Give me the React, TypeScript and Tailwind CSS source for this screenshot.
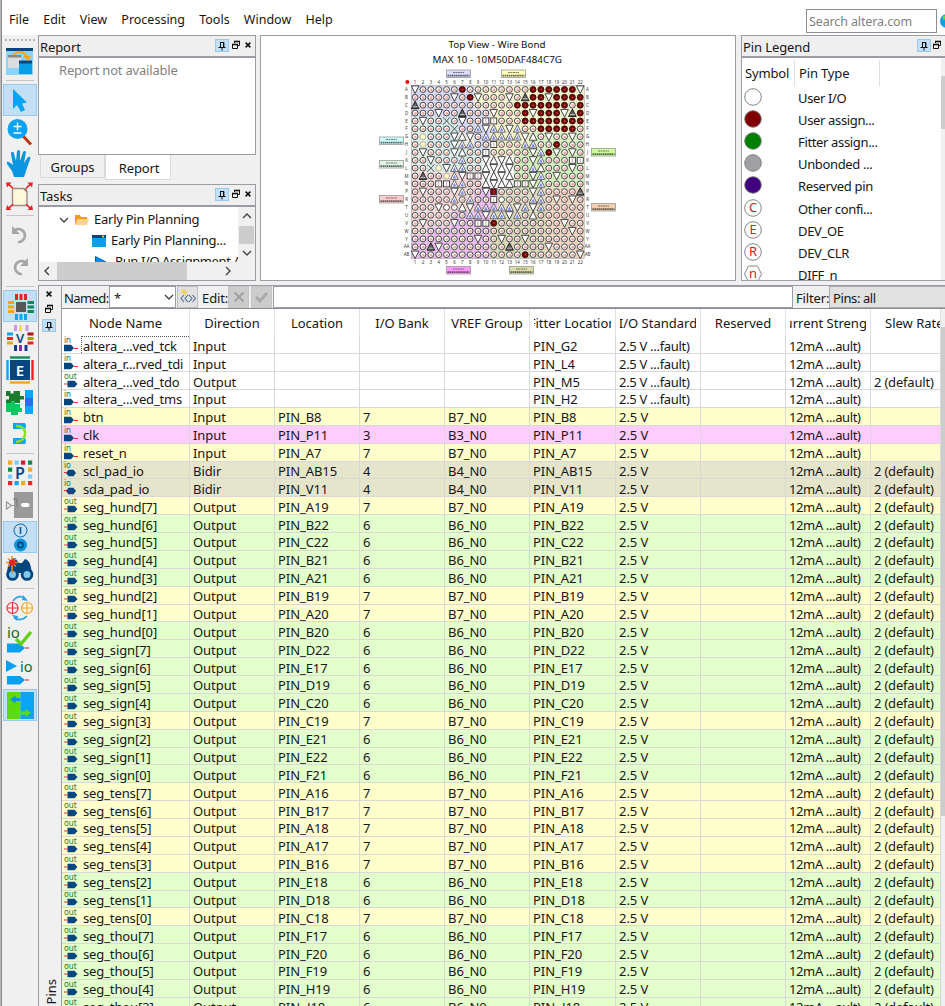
import React from "react";

/* ---------- data ---------- */

type Kind = "in" | "out" | "io";
type Row = [string, Kind, string, string];

const jtag: [string, Kind, string][] = [
  ["altera_...ved_tck", "in", "G2"],
  ["altera_r...rved_tdi", "in", "L4"],
  ["altera_...ved_tdo", "out", "M5"],
  ["altera_...ved_tms", "in", "H2"],
];

const rows: Row[] = [
  ["btn", "in", "B8", "7"],
  ["clk", "in", "P11", "3"],
  ["reset_n", "in", "A7", "7"],
  ["scl_pad_io", "io", "AB15", "4"],
  ["sda_pad_io", "io", "V11", "4"],
  ["seg_hund[7]", "out", "A19", "7"],
  ["seg_hund[6]", "out", "B22", "6"],
  ["seg_hund[5]", "out", "C22", "6"],
  ["seg_hund[4]", "out", "B21", "6"],
  ["seg_hund[3]", "out", "A21", "6"],
  ["seg_hund[2]", "out", "B19", "7"],
  ["seg_hund[1]", "out", "A20", "7"],
  ["seg_hund[0]", "out", "B20", "6"],
  ["seg_sign[7]", "out", "D22", "6"],
  ["seg_sign[6]", "out", "E17", "6"],
  ["seg_sign[5]", "out", "D19", "6"],
  ["seg_sign[4]", "out", "C20", "6"],
  ["seg_sign[3]", "out", "C19", "7"],
  ["seg_sign[2]", "out", "E21", "6"],
  ["seg_sign[1]", "out", "E22", "6"],
  ["seg_sign[0]", "out", "F21", "6"],
  ["seg_tens[7]", "out", "A16", "7"],
  ["seg_tens[6]", "out", "B17", "7"],
  ["seg_tens[5]", "out", "A18", "7"],
  ["seg_tens[4]", "out", "A17", "7"],
  ["seg_tens[3]", "out", "B16", "7"],
  ["seg_tens[2]", "out", "E18", "6"],
  ["seg_tens[1]", "out", "D18", "6"],
  ["seg_tens[0]", "out", "C18", "7"],
  ["seg_thou[7]", "out", "F17", "6"],
  ["seg_thou[6]", "out", "F20", "6"],
  ["seg_thou[5]", "out", "F19", "6"],
  ["seg_thou[4]", "out", "H19", "6"],
  ["seg_thou[3]", "out", "J18", "6"],
];

const bankColor: Record<string, string> = {
  "3": "bg-[#ffccff]",
  "4": "bg-[#e5e5cc]",
  "6": "bg-[#e3ffcc]",
  "7": "bg-[#ffffcc]",
};

const direction: Record<Kind, string> = { in: "Input", out: "Output", io: "Bidir" };

const headers = [
  "Node Name",
  "Direction",
  "Location",
  "I/O Bank",
  "VREF Group",
  "Fitter Location",
  "I/O Standard",
  "Reserved",
  "Current Strength",
  "Slew Rate",
];

const legend: [string, string, string][] = [
  ["User I/O", "#ffffff", ""],
  ["User assign...", "#800000", ""],
  ["Fitter assign...", "#008000", ""],
  ["Unbonded ...", "#a0a0a4", ""],
  ["Reserved pin", "#400080", ""],
  ["Other confi...", "#ffffff", "C"],
  ["DEV_OE", "#ffffff", "E"],
  ["DEV_CLR", "#ffffff", "R"],
  ["DIFF_n", "#ffffff", "n"],
];

/* ---------- chip package view ---------- */

/* o pin, r assigned, v/a triangles, b clocked triangle, g ground, s square, d dark square, x cross, y yellow, w empty */
const pinMap = [
  "voooooroooooooorrrrrrv",
  "ooooovorvooovogrrvrrrr",
  "goooooooooooorrrrrrror",
  "ooovoogooovooorvrrrvgr",
  "ovooxovoossooorrrrrrrr",
  "oooooxoobvbbvboorrrrro",
  "oyooovavobbbbbvaovoovo",
  "oyooovbboosooobboorooo",
  "ovooovaoosooooovbrvovo",
  "oovoooboovavaoovboooss",
  "ooxyvbbooavavoobaooovo",
  "ogooybvssvavaoovbovooo",
  "ooossbbooavaassvbooooo",
  "ovooovboovdoooovboooog",
  "ooooobobooswooobbovovo",
  "ooovwwavbbbbbvbvbooooo",
  "ooooooobbvbbvboaoooooo",
  "ovooovoossroooooooovoo",
  "oooooooooooooooooooovo",
  "oooooooovoovoovooooooo",
  "oogvoooooooogoooovoooo",
  "voooooooooooooroooooov",
];

const rowNames = "A B C D E F G H J K L M N P R T U V W Y AA AB".split(" ");

/* [x, y, w, h, color] in pin units */
const regions: [number, number, number, number, string][] = [
  [0, 0, 22, 22, "#f3f3ec"],
  [0, 0, 9, 4, "#dcdcf6"],
  [5, 3, 4, 3, "#dcdcf6"],
  [8, 3, 2, 6, "#dcdcf6"],
  [2, 4, 4, 4, "#d6efee"],
  [0, 4, 2, 9, "#e7f2ea"],
  [2, 8, 7, 3, "#e0f1ed"],
  [8, 0, 8, 3, "#fbf9d3"],
  [10, 3, 6, 6, "#fbf9d0"],
  [16, 0, 6, 6, "#f1f7cf"],
  [13, 8, 9, 5, "#d6f5bf"],
  [15, 6, 7, 3, "#ddf6c8"],
  [9, 9, 4, 4, "#ffffff"],
  [0, 11, 9, 5, "#f8dddd"],
  [0, 16, 5, 3, "#f7dcde"],
  [5, 16, 5, 6, "#efbff3"],
  [2, 18, 8, 4, "#efbff3"],
  [0, 19, 2, 3, "#efbff3"],
  [8, 13, 3, 3, "#efbff3"],
  [10, 16, 8, 6, "#dbdbbc"],
  [11, 13, 6, 3, "#e3e0c5"],
  [17, 13, 5, 9, "#f2dac5"],
];

const banks: [number, number, string][] = [
  [446, 69.5, "#dcdcff"],
  [501, 69.5, "#ffffb8"],
  [379, 136.5, "#ccffff"],
  [379, 160, "#e0f5e5"],
  [379, 195, "#ffcccc"],
  [591, 148, "#ccff99"],
  [591, 203, "#f5d0b0"],
  [446, 266, "#ff99ff"],
  [509, 266, "#dcdca8"],
];

function Pin({ k, x, y }: { k: string; x: number; y: number }) {
  switch (k) {
    case "v":
      return <path d={`M${x - 3.8} ${y - 3.6}h7.6L${x} ${y + 4}z`} fill="#fff" stroke="#333" strokeWidth="0.9" />;
    case "a":
      return <path d={`M${x - 3.8} ${y + 3.6}h7.6L${x} ${y - 4}z`} fill="#fff" stroke="#333" strokeWidth="0.9" />;
    case "b":
      return (
        <g>
          <path d={`M${x - 3.8} ${y + 3.4}h7.6L${x} ${y - 4}z`} fill="#fff" stroke="#444" strokeWidth="0.8" />
          <path d={`M${x - 1.8} ${y + 2.5}h3.6L${x} ${y - 1.2}z`} fill="#7c86ef" />
        </g>
      );
    case "g":
      return (
        <g>
          <path d={`M${x - 3.8} ${y + 3.4}h7.6L${x} ${y - 4}z`} fill="#666" stroke="#111" strokeWidth="0.9" />
          <path d={`M${x - 2.5} ${y + 1.4}h5`} stroke="#ddd" strokeWidth="0.7" />
        </g>
      );
    case "x":
      return <path d={`M${x - 3.6} ${y - 3.8}L${x + 3.6} ${y + 3.8}M${x + 3.6} ${y - 3.8}L${x - 3.6} ${y + 3.8}`} fill="none" stroke="#444" strokeWidth="0.9" />;
    case "s":
    case "d":
      return (
        <g>
          <rect x={x - 3} y={y - 3} width="6" height="6" fill={k === "d" ? "#800000" : "#fff"} stroke="#333" strokeWidth="0.9" />
          <path d={`M${x} ${y - 2}v4`} stroke="#a66" strokeWidth="0.6" />
        </g>
      );
    case "r":
      return (
        <g>
          <circle cx={x} cy={y} r="3" fill="#7c0404" stroke="#2c0000" strokeWidth="0.8" />
          <circle cx={x + 0.3} cy={y} r="0.9" fill="#a44" />
        </g>
      );
    default:
      return (
        <g>
          <circle cx={x} cy={y} r="2.9" fill={k === "y" ? "#fff9c0" : "#fff"} stroke={k === "y" ? "#aaa" : "#333"} strokeWidth="0.9" />
          {k === "o" && <circle cx={x + 0.3} cy={y + 0.4} r="1.4" fill="#f4a79d" />}
        </g>
      );
  }
}

function ChipView() {
  const p = 7.864;
  const px = (c: number) => 415.1 + c * p;
  const py = (r: number) => 89.5 + r * p;
  return (
    <svg className="block h-[244px] w-[475px]" viewBox="261 36 475 244" fontFamily="Noto Sans, sans-serif">
      <defs>
        <pattern id="net" width="2.62" height="2.62" patternUnits="userSpaceOnUse">
          <rect width="1.1" height="1.1" fill="#8a8a90" opacity="0.4" />
        </pattern>
      </defs>
      <text x="448.500" y="47.500" fontSize="9.800" fill="#111" textLength="97">Top View - Wire Bond</text>
      <text x="432.500" y="63" fontSize="9.800" fill="#111" textLength="129.500">MAX 10 - 10M50DAF484C7G</text>
      {regions.map(([x, y, w, h, c], i) => (
        <rect key={i} x={411.2 + x * p} y={85.6 + y * p} width={w * p} height={h * p} fill={c} />
      ))}
      <rect x="411.200" y="85.600" width="173" height="173" fill="url(#net)" stroke="#999" strokeWidth="0.5" />
      {pinMap.map((line, r) => line.split("").map((k, c) => <Pin key={`${r}-${c}`} k={k} x={px(c)} y={py(r)} />))}
      {rowNames.map((n, r) => (
        <g key={n} fontSize="4.4" fill="#333" textAnchor="middle">
          <text x="406.500" y={py(r) + 1.6}>{n}</text>
          <text x="587.500" y={py(r) + 1.6}>{n}</text>
          <text x={px(r)} y="83.800">{r + 1}</text>
          <text x={px(r)} y="264">{r + 1}</text>
        </g>
      ))}
      <circle cx="407.300" cy="82" r="2" fill="#f00" />
      {banks.map(([x, y, c], i) => (
        <g key={i}>
          <rect x={x + 0.5} y={y + 0.5} width="24" height="7.500" fill={c} stroke="#999" strokeWidth="0.8" />
          <path d={`M${x + 7} ${y + 3}h11`} stroke="#333" strokeWidth="0.9" strokeDasharray="2 0.5" opacity="0.7" />
          <path d={`M${x + 1.5} ${y + 6.1}h22`} stroke="#333" strokeWidth="1.6" strokeDasharray="1.6 0.5" opacity="0.75" />
        </g>
      ))}
    </svg>
  );
}

/* ---------- dock controls ---------- */

const PinGlyph = () => (
  <span className="flex h-[13px] w-[14px] shrink-0 items-center justify-center border border-[#99c9ef] bg-[#c3dff5]">
    <svg className="h-[10px] w-[10px] shrink-0" viewBox="0 0 10 10" fill="none" stroke="#111">
      <path d="M3.500 1.500v5M3 1.500h4M6.500 1.500v5" />
      <path d="M7 1.500v5" strokeWidth="0.8" />
      <path d="M1.500 6.500h7M5 7v2.500" />
    </svg>
  </span>
);
const FloatGlyph = () => (
  <svg className="block h-[10px] w-[10px] shrink-0" viewBox="0 0 10 10" fill="none" stroke="#111">
    <path d="M3.500 3V1.500h5v4H7" />
    <path d="M3 1.500h6" strokeWidth="1.6" />
    <path d="M1.500 4.500h5v4h-5z" />
    <path d="M1 4.500h6" strokeWidth="1.6" />
  </svg>
);
const CloseGlyph = () => (
  <svg className="block h-[10px] w-[10px] shrink-0" viewBox="0 0 10 10" stroke="#111" strokeWidth="1.5">
    <path d="M2.600 2.600l4.800 4.800M7.400 2.600L2.600 7.400" />
  </svg>
);

function DockTitle({ title, close = true }: { title: string; close?: boolean }) {
  return (
    <div className={`flex h-[22px] shrink-0 items-center border-b-2 border-[#9c9ca5] bg-[#efefef] pl-[1px] ${close ? "pr-[2px]" : "pr-[3px]"}`}>
      <span className="flex-1 pt-[2px] leading-none tracking-[-0.100px]">{title}</span>
      <div className="flex gap-[1.500px] pb-[1px]">
        <PinGlyph />
        <span className="pt-[1px]"><FloatGlyph /></span>
        {close && <span className="pl-[1px] pt-[1px]"><CloseGlyph /></span>}
      </div>
    </div>
  );
}

/* ---------- tool strip ---------- */

function Tool({ children, on = false }: { children: React.ReactNode; on?: boolean }) {
  return (
    <div className={on ? "h-[32px] w-[34px] border border-[#99c9ef] bg-[#c3dff5]" : "h-[32px] w-[34px] border border-transparent"}>
      <svg className="-ml-px -mt-px block h-[32px] w-[34px]" viewBox="0 0 34 32" fontFamily="Noto Sans, sans-serif">
        {children}
      </svg>
    </div>
  );
}
const Sep = () => (
  <div className="flex h-[7px] w-[34px] items-center justify-center">
    <div className="h-px w-[28px] bg-[#c6c6c6]" />
  </div>
);

const gridDots: [number, number, string][] = [
  [5, 3, "#f9a91c"], [11.5, 3, "#7ecbf5"], [18, 3, "#d81e2c"], [25, 3, "#0b8a4f"],
  [5, 10, "#0b8a4f"], [25, 10, "#f9a91c"], [5, 17, "#7ecbf5"], [25, 17, "#7ecbf5"],
  [5, 23.5, "#e8262c"], [11.5, 23.5, "#0ea5f0"], [18, 23.5, "#f9a91c"], [25, 23.5, "#e8262c"],
];

const corner = "M0 0h5.500L3.900 1.700 7.500 5.200 6.500 6.200 2.700 2.900 1 5z";

function Toolbar() {
  return (
    <div className="flex w-[36px] shrink-0 flex-col items-start bg-[#f0f0f0] pl-[1px]">
      <div className="flex h-[10px] items-center pl-[2px]">
        <div className="w-[30px] border-t-2 border-dotted border-[#b5b5b5]" />
      </div>
      <Tool>
        <rect x="3" y="3" width="27" height="27" fill="#8bd3f7" />
        <rect x="3" y="3" width="27" height="3" fill="#04477e" />
        <path d="M5 11h13v12H5z" fill="#dcdcdc" />
        <path d="M5 10h13v2.500H5z" fill="#8a8484" />
        <path d="M16 17h13v12H16z" fill="#0a9de8" />
        <path d="M16 15.500h13v3H16z" fill="#04477e" />
        <path d="M10 10Q17 3 24 11" fill="none" stroke="#f9a51a" strokeWidth="2" />
        <path d="M20 11h8l-3 5z" fill="#f9a51a" />
      </Tool>
      <Sep />
      <Tool on>
        <path d="M10 5v20l4-4 4 7 4-2-3-6.500 5-1z" fill="#08a5f4" />
      </Tool>
      <Tool>
        <path d="M20 20l8 8.500" stroke="#b83a12" strokeWidth="3" />
        <circle cx="14.500" cy="13" r="10" fill="#0aa2f2" />
        <path d="M14.500 6.500v8M10.500 10.500h8M10.500 17h8" stroke="#fff" strokeWidth="1.400" />
      </Tool>
      <Tool>
        <path d="M11 29l-2-6-5-7q-1-3 2-2l4 3L8 6q0-3 2.500-2l2.500 9 1-10q1.500-2 3 0l0 10 3-9q2-2 3 0l-2 11 4-6q2-1 2.500 1L24 20l-3 9z" fill="#0a96e2" />
      </Tool>
      <Tool>
        <path d="M9.500 8.500h11l3.500 3v14h-14.500z" fill="#fdf8dc" stroke="#a58b80" strokeWidth="1.400" />
        <path d="M20 8.500h4v4z" fill="#9a6f62" />
        <g fill="#e82028">
          <path d={corner} transform="translate(3 2.500)" />
          <path d={corner} transform="translate(30 2.500) scale(-1 1)" />
          <path d={corner} transform="translate(3 30) scale(1 -1)" />
          <path d={corner} transform="translate(30 30) scale(-1 -1)" />
        </g>
      </Tool>
      <Sep />
      <Tool>
        <path d="M12 11a6.500 6.500 0 1 1 3 12" fill="none" stroke="#a6a6a6" strokeWidth="2.600" />
        <path d="M9 7v8h8z" fill="#a6a6a6" />
      </Tool>
      <Tool>
        <path d="M22 11a6.500 6.500 0 1 0-3 12" fill="none" stroke="#a6a6a6" strokeWidth="2.600" />
        <path d="M25 7v8h-8z" fill="#a6a6a6" />
      </Tool>
      <Sep />
      <Tool on>
        <rect x="13" y="12" width="10" height="10" fill="#585858" />
        <path d="M13.500 4v6M18 4v6M22.500 4v6" stroke="#ef2028" strokeWidth="3" />
        <path d="M13.500 24v6M18 24v6M22.500 24v6" stroke="#0ea5ea" strokeWidth="3" />
        <path d="M5 12.500h6M5 17h6M5 21.500h6" stroke="#f9a31a" strokeWidth="3" />
        <path d="M24.500 12.500h6.500M24.500 17h6.500M24.500 21.500h6.500" stroke="#128a55" strokeWidth="3" />
      </Tool>
      <Tool>
        <path d="M12.500 3v6M24 3v6" stroke="#c79be0" strokeWidth="3" />
        <path d="M17.500 3v6" stroke="#f7e51c" strokeWidth="3" />
        <path d="M12.500 23v6M23 23v6" stroke="#123e8b" strokeWidth="3" />
        <path d="M17.500 23v6" stroke="#8330a0" strokeWidth="3" />
        <path d="M4 12h6" stroke="#0ea5ea" strokeWidth="3" />
        <path d="M4 16.500h6M24.500 21h6" stroke="#ef2028" strokeWidth="3" />
        <path d="M4 21h6" stroke="#f9a31a" strokeWidth="3" />
        <path d="M24.500 12h6" stroke="#a81218" strokeWidth="3" />
        <path d="M24.500 16.500h6" stroke="#a79a10" strokeWidth="3" />
        <text x="17" y="21" fontSize="13" fontWeight="600" textAnchor="middle" fill="#0d478b">V</text>
      </Tool>
      <Tool>
        <rect x="7" y="6" width="20" height="20" fill="#04477e" />
        <path d="M7 3.500h20" stroke="#128a55" strokeWidth="2.400" />
        <path d="M7 28.500h20" stroke="#f9a31a" strokeWidth="2.400" />
        <path d="M4.500 6v20" stroke="#0ea5ea" strokeWidth="2.400" />
        <path d="M29.500 6v20" stroke="#ef2028" strokeWidth="2.400" />
        <text x="17" y="21.500" fontSize="15" fontWeight="600" textAnchor="middle" fill="#fff">E</text>
      </Tool>
      <Tool>
        <rect x="22" y="4" width="8" height="24" fill="#0aa5f5" />
        <rect x="22" y="12" width="8" height="8" fill="#2d6af0" />
        <path d="M3 5h4.500v2.500h3V5H17v5h4v3.500h-4V17H3v-3.500h3V10H3z" fill="#1c7b2e" />
        <path d="M3 17h5v-2h4v3h5v4h2v4h-4v3H8v-3H3z" fill="#0ec760" />
      </Tool>
      <Tool>
        <path d="M10 5h12q2 3 0 6H10zM10 20h12q2 3 0 6H10z" fill="#0aa5f5" />
        <path d="M13 8q9 0 9 7.500T13 24" fill="none" stroke="#8fdc1e" strokeWidth="2.400" />
      </Tool>
      <Sep />
      <Tool>
        {gridDots.map(([x, y, c], i) => (
          <rect key={i} x={x} y={y + 0.5} width="4.200" height="4.200" fill={c} />
        ))}
        <text x="17" y="22" fontSize="16" fontWeight="600" textAnchor="middle" fill="#0d478b">P</text>
      </Tool>
      <Tool>
        <rect x="11" y="3" width="19" height="26" fill="#9a9a9a" />
        <path d="M3.500 13v7l5-3.500zM8 16.500h5" fill="#eee" stroke="#999" strokeWidth="1.200" />
        <path d="M10 10h4v8" stroke="#777" fill="none" />
        <rect x="18" y="14" width="8.500" height="4" rx="2" fill="#fff" />
      </Tool>
      <Tool on>
        <circle cx="17.500" cy="9.500" r="6.500" fill="none" stroke="#1266a8" />
        <path d="M17.500 6v7" stroke="#0d5c9c" strokeWidth="1.600" />
        <circle cx="17.500" cy="24" r="6.500" fill="#0a95dc" />
        <circle cx="17.500" cy="24" r="2.600" fill="none" stroke="#04477e" strokeWidth="1.600" />
      </Tool>
      <Tool>
        <path d="M4 20q1-14 8-15l4 5h3l3-4q5 0 7 14z" fill="#04477e" />
        <circle cx="9.500" cy="21.500" r="6.300" fill="#04477e" />
        <circle cx="24" cy="21.500" r="6.300" fill="#04477e" />
        <circle cx="9.500" cy="21.500" r="3.500" fill="#7ec9f0" />
        <circle cx="24" cy="21.500" r="3.500" fill="#7ec9f0" />
        <path d="M9 3v17M3 9.500h12M5 5.500l8 8M13 5.500l-8 8" stroke="#f08a18" strokeWidth="1.600" />
        <circle cx="9" cy="9.500" r="3" fill="#e8202a" />
      </Tool>
      <Sep />
      <Tool>
        <circle cx="9.500" cy="16" r="5.500" fill="#fff5f5" stroke="#e83038" strokeWidth="1.200" />
        <path d="M4 16h11M9.500 10.500v11" stroke="#e83038" strokeWidth="1.200" />
        <circle cx="24" cy="16" r="5.500" fill="#fff8e8" stroke="#f5a623" strokeWidth="1.200" />
        <path d="M18.500 16h11M24 10.500v11" stroke="#f5a623" strokeWidth="1.200" />
        <path d="M10 9Q15 2 22 6M24 24Q18 30 11 26" fill="none" stroke="#2aa3e0" strokeWidth="1.600" />
        <path d="M20 3l5 6-6-1zM14 29l-5-6 6 1z" fill="#2aa3e0" />
      </Tool>
      <Tool>
        <text x="4" y="14" fontSize="15" fill="#156b27">io</text>
        <path d="M4 19.500h13l5 4.500-5 4.500H4z" fill="#0aa0f0" />
        <path d="M22 24h4" stroke="#e02030" />
        <path d="M13 15l5 5L28 8" fill="none" stroke="#66cf18" strokeWidth="3.400" />
      </Tool>
      <Tool>
        <path d="M3 4v12l11-6z" fill="#0aa0f0" />
        <text x="17" y="15.500" fontSize="14.500" fill="#156b27">io</text>
        <path d="M4 20h13l5 4-5 4.500H4z" fill="#0aa0f0" />
        <path d="M22 24h4" stroke="#e02030" />
      </Tool>
      <div className="pt-[1px]">
        <Tool on>
          <rect x="4" y="3" width="13.500" height="27" fill="#5cdb0e" />
          <rect x="17.500" y="3" width="13.500" height="27" fill="#0aa5f5" />
          <path d="M7 10.500l5.500-4v2.500h5v3h-5v2.500z" fill="#0a95e8" />
          <path d="M28 24l-5.500-4v2.500h-5v3h5V28z" fill="#5cdb0e" />
        </Tool>
      </div>
    </div>
  );
}

/* ---------- pins table ---------- */

function NodeIcon({ kind }: { kind: Kind }) {
  return (
    <svg className="h-[17px] w-[16px] shrink-0" viewBox="0 0 16 17" fontFamily="Noto Sans, sans-serif">
      <text x="2" y="7" fontSize="8" fill="#1b7a2c">{kind}</text>
      {kind === "in" && (
        <>
          <path d="M2 8.800h7l3 3.300-3 3.200H2z" fill="#04477e" />
          <path d="M12 12.500h4" stroke="#e03040" />
        </>
      )}
      {kind === "out" && (
        <>
          <path d="M5.500 8.800h7l3 3.300-3 3.200h-7z" fill="#04477e" />
          <path d="M2 12h4" stroke="#e03040" />
        </>
      )}
      {kind === "io" && (
        <>
          <path d="M6.500 8.800h5l2.500 3.300-2.500 3.200h-5L4 12.100z" fill="#04477e" />
          <path d="M2 11.500h3" stroke="#e03040" />
        </>
      )}
    </svg>
  );
}

const gridCols = "grid grid-cols-[128px_85px_85px_85px_85px_86px_85px_85px_85px_70px]";

const cellTracking = (s: string, i: number) => {
  if (i === 8) return "tracking-[-0.200px]";
  if (s.startsWith("12mA")) return "tracking-[-0.380px]";
  return s.includes("...") ? "tracking-[-0.300px]" : "tracking-[-0.060px]";
};

function TableRow({ name, kind, cells, color, first }: { name: string; kind: Kind; cells: string[]; color: string; first: boolean }) {
  return (
    <div className={`${gridCols} ${color} h-[17.880px]`}>
      <div className="flex items-center border-b border-r border-[#d8d8d8]">
        <NodeIcon kind={kind} />
        <span className={first ? "ml-[3px] flex h-full flex-1 items-center border-l border-t border-dotted border-[#555] pl-[1px]" : "ml-[3px] pl-[2px] pt-[1px]"}>
          <span className={`block pt-[2px] ${name.includes("...") ? "tracking-[-0.180px]" : "tracking-[-0.120px]"}`}>{name}</span>
        </span>
      </div>
      {cells.map((c, i) => (
        <div key={i} className={`flex items-center border-b border-r border-[#d8d8d8] pl-[3px] pt-[3px] ${cellTracking(c, i)}`}>
          {c}
        </div>
      ))}
    </div>
  );
}

function PinsTable() {
  return (
    <div className="flex min-h-0 flex-1 overflow-hidden bg-white">
      <div className="w-[879px] shrink-0">
        <div className={`${gridCols} h-[27.300px]`}>
          {headers.map((h) => (
            <div key={h} className="flex items-center border-r border-[#e2e2e2] pt-[1px]">
              <div className={h === "Slew Rate" ? "ml-[14px] min-w-0 flex-1 overflow-hidden py-[2px]" : "mx-[4px] flex min-w-0 flex-1 justify-center overflow-hidden py-[2px]"}>
                <span className="shrink-0">{h}</span>
              </div>
            </div>
          ))}
        </div>
        {jtag.map(([n, k, pin], i) => (
          <TableRow
            key={n}
            name={n}
            kind={k}
            first={i === 0}
            color="bg-white"
            cells={[direction[k], "", "", "", `PIN_${pin}`, "2.5 V ...fault)", "", "12mA ...ault)", k === "out" ? "2 (default)" : ""]}
          />
        ))}
        {rows.map(([n, k, pin, bank]) => (
          <TableRow
            key={n}
            name={n}
            kind={k}
            first={false}
            color={bankColor[bank]}
            cells={[
              direction[k],
              `PIN_${pin}`,
              bank,
              `B${bank}_N0`,
              `PIN_${pin}`,
              "2.5 V",
              "",
              "12mA ...ault)",
              k === "in" ? "" : "2 (default)",
            ]}
          />
        ))}
      </div>
      <div className="flex-1 bg-[#f0f0f0] pt-[18px]">
        <div className="h-[489px] bg-[#cdcdcd]" />
      </div>
    </div>
  );
}

/* ---------- page ---------- */

const Chevron = ({ d }: { d: string }) => (
  <svg className="block h-[10px] w-[10px] shrink-0" viewBox="0 0 10 10" fill="none" stroke="#444" strokeWidth="1.400">
    <path d={d} />
  </svg>
);

export default function App() {
  return (
    <div
      className="flex h-[1006px] w-[945px] overflow-hidden whitespace-nowrap bg-[#f0f0f0] text-[13px] leading-none text-[#161616]"
      style={{ fontFamily: '"Noto Sans", "Open Sans", sans-serif' }}
    >
      <div className="w-[2px] shrink-0 border-r border-[#888] bg-[#b9b9b9]" />
      <div className="flex min-w-0 flex-1 flex-col">
        <header className="flex h-[35px] shrink-0 bg-white text-[12.500px]">
          <nav className="flex flex-1 gap-[14.200px] pl-[7px] pt-[14px]">
            {["File", "Edit", "View", "Processing", "Tools", "Window", "Help"].map((m) => (
              <span key={m}>{m}</span>
            ))}
          </nav>
          <div className="mt-[9px] flex h-[24px] w-[131px] items-center border border-[#8d8d93] bg-white pl-[2px] pt-[3px] tracking-[-0.120px] text-[#808080]">
            Search altera.com
          </div>
          <div className="w-[8px] overflow-hidden pl-[3px] pt-[14px]">
            <svg className="h-[14px] w-[14px]" viewBox="0 0 14 14">
              <circle cx="7" cy="7" r="7" fill="#0a9ff0" />
              <path d="M3 2l4-1v4L3 6z" fill="#7cd61c" />
            </svg>
          </div>
        </header>

        <div className="flex min-h-0 flex-1">
          <Toolbar />
          <main className="flex min-w-0 flex-1 flex-col">
            <div className="flex h-[246px] shrink-0">
              <div className="mr-[4px] flex w-[218px] flex-col">
                <section className="flex h-[120px] flex-col border border-[#9c9ca5] bg-white">
                  <DockTitle title="Report" />
                  <p className="pl-[20px] pt-[6px] tracking-[-0.200px] text-[#828282]">Report not available</p>
                </section>
                <div className="flex h-[29px] items-start">
                  <div className="ml-[2px] flex h-[23px] w-[65px] items-center justify-center border border-t-0 border-[#dadada] pt-[2px] tracking-[-0.150px]">Groups</div>
                  <div className="flex h-[25px] w-[66px] items-center justify-center border border-t-0 border-[#dadada] bg-white pl-[2px] pt-[2px] tracking-[-0.150px]">Report</div>
                </div>
                <section className="flex h-[97px] flex-col border border-[#9c9ca5] bg-white">
                  <DockTitle title="Tasks" />
                  <div className="flex h-[55px]">
                    <div className="min-w-0 flex-1 overflow-hidden pt-[2px] tracking-[-0.250px]">
                      <div className="flex h-[21px] items-center pl-[20px]">
                        <Chevron d="M1 3l4 4 4-4" />
                        <svg className="ml-[6px] h-[12px] w-[14px] shrink-0" viewBox="0 0 14 12">
                          <path d="M0 11V1h5l1 2h6v2H3z" fill="#f59a1c" />
                          <path d="M3 5h11l-2 6H0z" fill="#ffd38a" />
                        </svg>
                        <span className="ml-[5px]">Early Pin Planning</span>
                      </div>
                      <div className="flex h-[21px] items-center pl-[53px]">
                        <svg className="h-[12px] w-[14px] shrink-0" viewBox="0 0 14 12">
                          <path d="M0 0h14v12H0z" fill="#0a9fe8" />
                          <path d="M0 0h14v3H0z" fill="#04477e" />
                          <path d="M10 .5h2v2h-2z" fill="#f9c81c" />
                        </svg>
                        <span className="ml-[5px]">Early Pin Planning...</span>
                      </div>
                      <div className="flex h-[21px] items-center pl-[56px]">
                        <svg className="h-[12px] w-[11px] shrink-0" viewBox="0 0 11 12">
                          <path d="M.5 .5L11 6 .5 11.500z" fill="#0a8fe8" stroke="#0a5db0" />
                        </svg>
                        <span className="ml-[9px] tracking-[-0.400px]">Run I/O Assignment Analysis</span>
                      </div>
                    </div>
                    <div className="flex w-[17px] shrink-0 flex-col items-center bg-[#f0f0f0] pt-[4px]">
                      <Chevron d="M1 7l4-4 4 4" />
                      <div className="mt-[5px] h-[18px] w-[15px] bg-[#cdcdcd]" />
                      <div className="pt-[4px]"><Chevron d="M1 3l4 4 4-4" /></div>
                    </div>
                  </div>
                  <div className="flex flex-1 items-center bg-[#f0f0f0] pl-[3px]">
                    <Chevron d="M7 1L3 5l4 4" />
                    <div className="ml-[5px] h-full w-[130px] bg-[#cdcdcd]" />
                    <div className="ml-[36px]"><Chevron d="M3 1l4 4-4 4" /></div>
                  </div>
                </section>
              </div>

              <section className="mr-[5px] w-[476px] shrink-0 overflow-hidden border border-[#9c9ca5] bg-white">
                <ChipView />
              </section>

              <section className="flex min-w-0 flex-1 flex-col overflow-hidden border border-r-0 border-[#9c9ca5] bg-white">
                <DockTitle title="Pin Legend" close={false} />
                <div className="flex min-h-0 flex-1">
                  <div className="flex-1 overflow-hidden">
                    <div className="flex h-[28px] pt-[2px] tracking-[-0.150px]">
                      <div className="flex w-[53px] items-center border-r border-[#e0e0e0] pl-[3px]">Symbol</div>
                      <div className="flex w-[85px] items-center border-r border-[#e0e0e0] pl-[4px]">Pin Type</div>
                    </div>
                    {legend.map(([label, fill, letter]) => (
                      <div key={label} className="flex h-[22.100px] items-center pl-[2px]">
                        <svg className="h-[18px] w-[18px] shrink-0" viewBox="0 0 18 18" fontFamily="Noto Sans, sans-serif">
                          {letter === "n" ? (
                            <path d="M4.500 1h9l4 8-4 8h-9l-4-8z" fill="#fff" stroke="#888" />
                          ) : (
                            <circle cx="9" cy="9" r="8.300" fill={fill} stroke="#777" strokeWidth="0.900" />
                          )}
                          {letter && <text x="9" y="13.400" fontSize="13" textAnchor="middle" fill="#d82020">{letter}</text>}
                        </svg>
                        <span className="ml-[36px] pt-[3px] tracking-[-0.350px]">{label}</span>
                      </div>
                    ))}
                  </div>
                  <div className="w-[4px] bg-[#f0f0f0] pt-[18px]">
                    <div className="h-[53px] bg-[#cdcdcd]" />
                  </div>
                </div>
              </section>
            </div>

            <section className="mt-[4px] flex min-h-0 flex-1 border-l border-t border-[#9c9ca5]">
              <aside className="flex w-[23px] shrink-0 flex-col items-center justify-between border-r border-[#9c9ca5] pb-[2px] pt-[3px]">
                <div className="flex flex-col items-center gap-[5px] pr-[2px]">
                  <CloseGlyph />
                  <FloatGlyph />
                  <PinGlyph />
                </div>
                <span className="ml-[2px] rotate-180 text-[13px] [writing-mode:vertical-rl]">Pins</span>
              </aside>
              <div className="flex min-w-0 flex-1 flex-col">
                <div className="flex h-[23px] shrink-0 items-stretch border-b border-[#8c8c98]">
                  <span className="flex w-[47px] shrink-0 items-center pl-[2px] pt-[2px] tracking-[-0.600px]">Named:</span>
                  <div className="flex w-[67px] shrink-0 items-center justify-between border border-[#9c9ca5] bg-white pl-[4px] pr-[1px]">
                    <span className="pt-[3px]">*</span>
                    <Chevron d="M1 3l4 4 4-4" />
                  </div>
                  <div className="ml-[1px] flex w-[21px] shrink-0 items-center justify-center border border-[#c0c0c0] bg-[#e1e1e1]">
                    <svg className="h-[18px] w-[18px] shrink-0" viewBox="0 0 18 18" fill="none">
                      <path d="M5 7L2 10.500 5 14M9 7L6 10.500 9 14M10 7l3 3.500-3 3.500M13.500 7l3 3.500-3 3.500" stroke="#4b6b93" strokeWidth="1.100" />
                      <path d="M5 1v6M1.500 4h7M2.500 1.500l5 5M7.500 1.500l-5 5" stroke="#f6c83a" strokeWidth="0.900" />
                    </svg>
                  </div>
                  <span className="flex w-[30px] shrink-0 items-center pl-[4px] pt-[2px] tracking-[-0.100px]">Edit:</span>
                  <div className="flex w-[21px] shrink-0 items-center justify-center border border-[#c4c4c4] bg-[#cccccc]">
                    <svg className="h-[12px] w-[12px]" viewBox="0 0 12 12" stroke="#a0a0a0" strokeWidth="1.800"><path d="M1.500 1.500l9 9M10.500 1.500l-9 9" /></svg>
                  </div>
                  <div className="ml-[2px] flex w-[21px] shrink-0 items-center justify-center border border-[#c4c4c4] bg-[#cccccc]">
                    <svg className="h-[12px] w-[13px]" viewBox="0 0 13 12" fill="none" stroke="#a8a8a8" strokeWidth="2.800"><path d="M1 6l4 4 7-8" /></svg>
                  </div>
                  <div className="ml-[1px] w-[520px] shrink-0 border border-[#9c9ca5] bg-white" />
                  <span className="flex w-[36px] shrink-0 items-center pl-[3px] pt-[2px] tracking-[-0.150px]">Filter:</span>
                  <div className="flex flex-1 items-center border border-r-0 border-[#ababab] bg-[#e1e1e1] pl-[3px] pt-[2px] tracking-[-0.400px]">Pins: all</div>
                </div>
                <PinsTable />
              </div>
            </section>
          </main>
        </div>
      </div>
    </div>
  );
}
